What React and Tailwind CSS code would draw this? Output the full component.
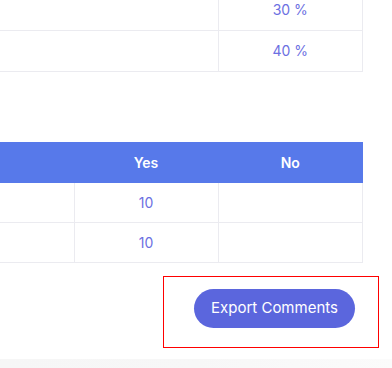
import React from "react";

const pct = ["30 %", "40 %"];
const answers = [
  { yes: "10", no: "" },
  { yes: "10", no: "" },
];

export default function App() {
  return (
    <div className="w-[392px] h-[368px] overflow-hidden bg-white font-['Inter',sans-serif] relative">
      {/* score table */}
      <table className="w-[363px] -mt-[11px] border-collapse table-fixed text-[14px] text-[#6c70e2]">
        <tbody>
          {pct.map((p, i) => (
            <tr key={i} className="h-[41px] border-b border-[#ebebf0]">
              <td className="w-[218px] border-r border-[#ebebf0]"></td>
              <td className="text-center border-r border-[#ebebf0]">{p}</td>
            </tr>
          ))}
        </tbody>
      </table>

      {/* comments table */}
      <table className="w-[363px] mt-[70px] border-collapse table-fixed text-[14px]">
        <thead className="bg-[#5779ea] text-white">
          <tr className="h-[41px]">
            <th className="w-[74px]"></th>
            <th className="w-[144px] font-semibold">Yes</th>
            <th className="font-semibold">No</th>
          </tr>
        </thead>
        <tbody className="text-[#6c70e2]">
          {answers.map((a, i) => (
            <tr key={i} className="h-[40px] border-b border-[#ebebf0]">
              <td className="border-r border-[#ebebf0]"></td>
              <td className="text-center border-r border-[#ebebf0]">{a.yes}</td>
              <td className="text-center border-r border-[#ebebf0]">{a.no}</td>
            </tr>
          ))}
        </tbody>
      </table>

      <div className="flex justify-end pr-[13px] mt-[13px]">
        <div className="w-[216px] h-[72px] border border-[#ff0000] pt-[12px] pl-[30px]">
          <button className="w-[161px] h-[39px] rounded-full bg-[#5b66dd] text-white text-[15px]">
            Export Comments
          </button>
        </div>
      </div>

      <div className="absolute left-0 right-0 bottom-0 h-[9px] bg-gradient-to-r from-[#f6f6f6] via-[#f7f7f7] to-[#fbfbfb]"></div>
    </div>
  );
}
